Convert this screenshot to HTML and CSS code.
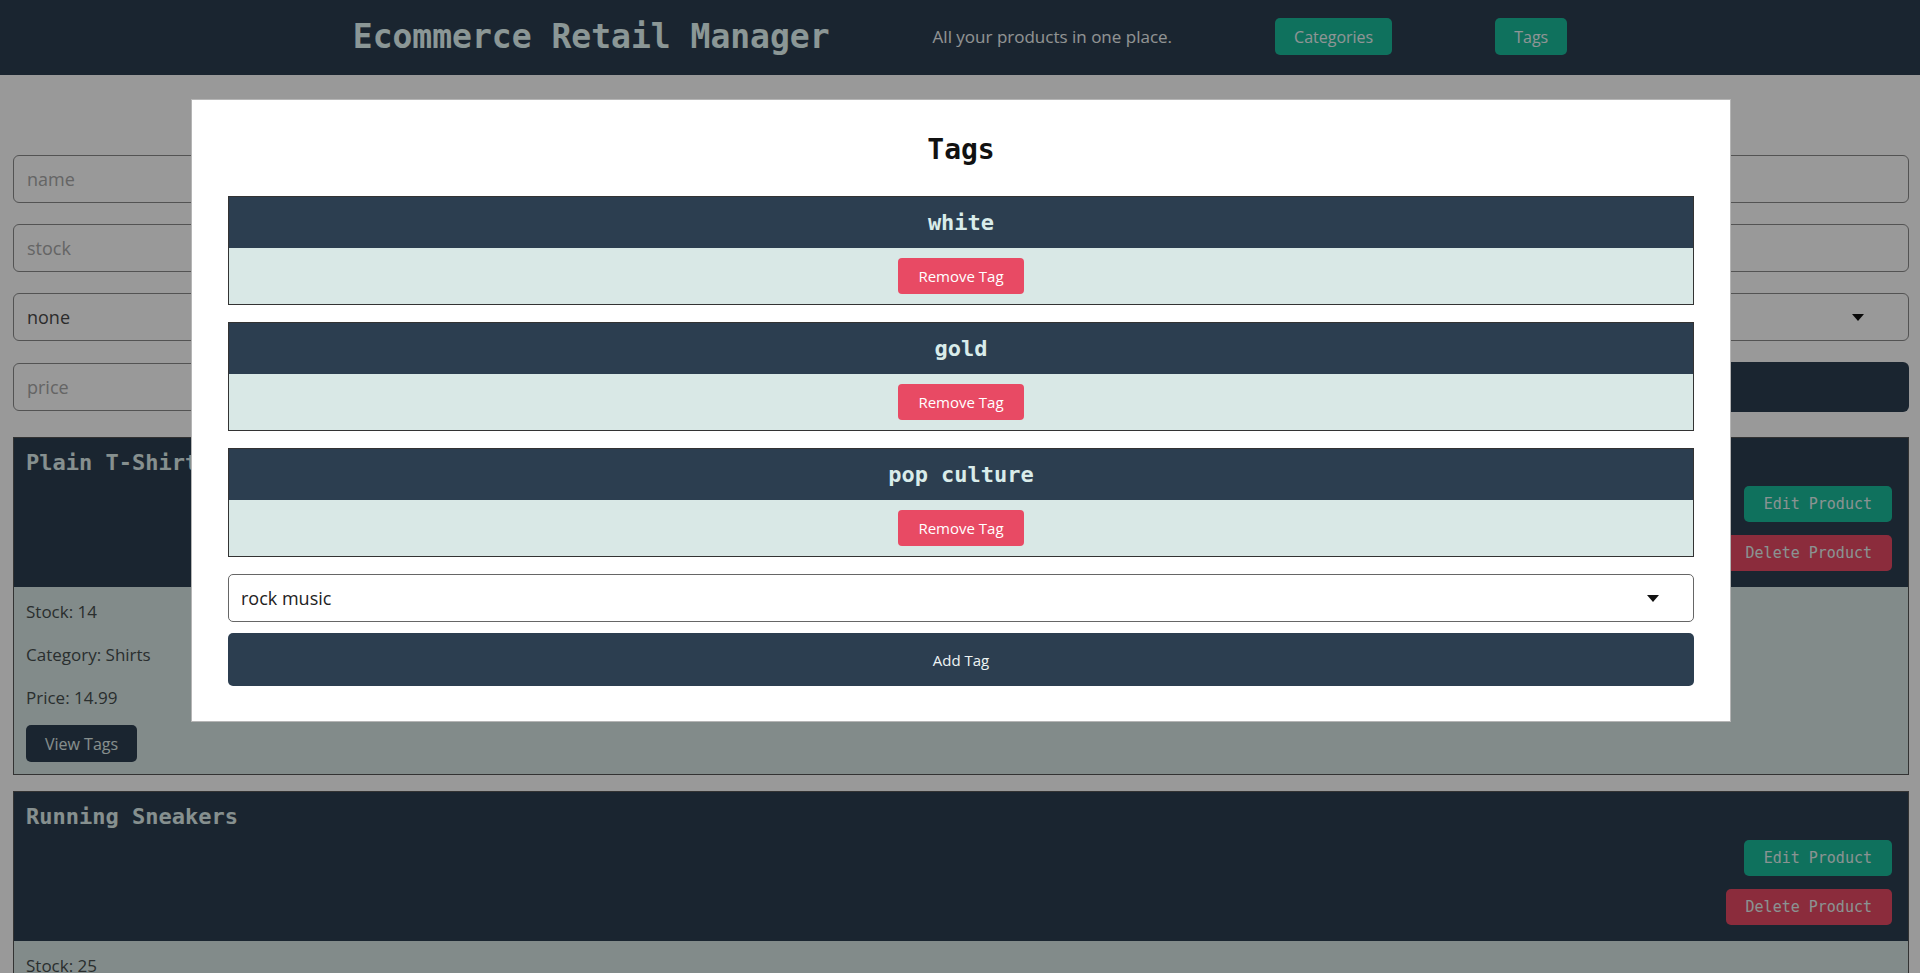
FILE: index.html
```
<!DOCTYPE html>
<html lang="en">
<head>
<meta charset="utf-8">
<title>Ecommerce Retail Manager</title>
<link rel="stylesheet" href="styles.css">
</head>
<body>
<header class="topbar">
  <h1 class="brand">Ecommerce Retail Manager</h1>
  <p class="tagline">All your products in one place.</p>
  <button class="nav-btn">Categories</button>
  <button class="nav-btn">Tags</button>
</header>

<main class="content">
  <form class="product-form">
    <input class="field" type="text" placeholder="name">
    <input class="field" type="text" placeholder="stock">
    <div class="field select-field">
      <span>none</span>
      <svg class="caret" width="12" height="7" viewBox="0 0 12 7"><path d="M0 0h12L6 7z" fill="#111"/></svg>
    </div>
    <div class="price-row">
      <input class="field price-input" type="text" placeholder="price">
      <button class="submit-btn" type="button">Add Product</button>
    </div>
  </form>

  <section class="product-list">
    <article class="product-card">
      <div class="product-head">
        <h2 class="product-name">Plain T-Shirt</h2>
        <div class="actions">
          <button class="btn-edit">Edit Product</button>
          <button class="btn-delete">Delete Product</button>
        </div>
      </div>
      <div class="product-body">
        <p>Stock: 14</p>
        <p>Category: Shirts</p>
        <p>Price: 14.99</p>
        <button class="btn-view">View Tags</button>
      </div>
    </article>
    <article class="product-card">
      <div class="product-head">
        <h2 class="product-name">Running Sneakers</h2>
        <div class="actions">
          <button class="btn-edit">Edit Product</button>
          <button class="btn-delete">Delete Product</button>
        </div>
      </div>
      <div class="product-body">
        <p>Stock: 25</p>
        <p>Category: Shoes</p>
        <p>Price: 90</p>
        <button class="btn-view">View Tags</button>
      </div>
    </article>
  </section>
</main>

<div class="overlay"></div>

<div class="modal">
  <h2 class="modal-title">Tags</h2>
  <div class="tag-list">
    <div class="tag-card">
      <div class="tag-head">white</div>
      <div class="tag-body"><button class="btn-remove">Remove Tag</button></div>
    </div>
    <div class="tag-card">
      <div class="tag-head">gold</div>
      <div class="tag-body"><button class="btn-remove">Remove Tag</button></div>
    </div>
    <div class="tag-card">
      <div class="tag-head">pop culture</div>
      <div class="tag-body"><button class="btn-remove">Remove Tag</button></div>
    </div>
    <div class="tag-select">
      <span>rock music</span>
      <svg class="caret" width="12" height="7" viewBox="0 0 12 7"><path d="M0 0h12L6 7z" fill="#111"/></svg>
    </div>
  </div>
  <button class="btn-add">Add Tag</button>
</div>
</body>
</html>
```

FILE: styles.css
```
* { box-sizing: border-box; }

body {
  margin: 0;
  background: #ffffff;
  font-family: "Open Sans", "Noto Sans", sans-serif;
}

button { font-family: inherit; cursor: pointer; }

.topbar {
  height: 75px;
  background: #2c3e50;
  display: flex;
  align-items: center;
  justify-content: center;
  gap: 103px;
  padding-bottom: 2px;
}

.brand {
  margin: 0;
  font-family: "DejaVu Sans Mono", monospace;
  font-weight: bold;
  font-size: 33px;
  color: #e8fcfa;
}

.tagline {
  margin: 0;
  font-size: 17px;
  color: #f2f6f6;
}

.nav-btn {
  height: 37px;
  padding: 0 19px;
  border: none;
  border-radius: 5px;
  background: #1abc9c;
  color: #eef8f8;
  font-size: 16px;
}

.content {
  padding: 0 11px 0 13px;
}

.product-form {
  display: flex;
  flex-direction: column;
  gap: 21px;
  padding-top: 80px;
}

.field {
  height: 48px;
  width: 100%;
  border: 1px solid #8a8a8a;
  border-radius: 6px;
  background: transparent;
  padding: 0 13px;
  font-family: "Open Sans", sans-serif;
  font-size: 18px;
  color: #444;
}

.field::placeholder { color: #a8a8a8; }

.select-field {
  display: flex;
  align-items: center;
  justify-content: space-between;
  padding-right: 44px;
  color: #4a4a4a;
}

.price-row {
  display: flex;
  gap: 12px;
  align-items: center;
}

.price-input { flex: 1; }

.submit-btn {
  flex: 1;
  height: 50px;
  border: none;
  border-radius: 6px;
  background: #2c3e50;
  color: #d9e8e6;
  font-size: 16px;
}

.product-list {
  display: flex;
  flex-direction: column;
  gap: 16px;
  margin-top: 25px;
}

.product-card {
  border: 1px solid #555;
}

.product-head {
  background: #2c3e50;
  padding: 12px 16px 16px 12px;
}

.product-name {
  margin: 0;
  font-family: "DejaVu Sans Mono", monospace;
  font-weight: bold;
  font-size: 22px;
  line-height: 26px;
  color: #e0f0ee;
}

.actions {
  margin-top: 10px;
  display: flex;
  flex-direction: column;
  align-items: flex-end;
  gap: 13px;
}

.btn-edit, .btn-delete {
  height: 36px;
  padding: 0 20px;
  border: none;
  border-radius: 5px;
  font-family: "DejaVu Sans Mono", monospace;
  font-size: 15px;
  color: #e6f5f3;
}

.btn-edit { background: #1abc9c; }
.btn-delete { background: #e84a64; }

.product-body {
  background: #d9e8e6;
  padding: 13px 12px 12px;
}

.product-body p {
  margin: 0 0 19px;
  font-size: 17px;
  line-height: 24px;
  color: #464e4e;
}

.product-body p:nth-of-type(3) { margin-bottom: 15px; }

.btn-view {
  height: 37px;
  padding: 0 19px;
  border: none;
  border-radius: 5px;
  background: #2c3e50;
  color: #e0eeec;
  font-size: 16px;
}

.overlay {
  position: fixed;
  inset: 0;
  background: rgba(0, 0, 0, 0.4);
}

.modal {
  position: fixed;
  top: 99px;
  left: 191px;
  width: 1540px;
  background: #ffffff;
  border: 1px solid #b5b5b5;
  padding: 33px 36px 35px;
}

.modal-title {
  margin: 0 0 30px;
  text-align: center;
  font-family: "DejaVu Sans Mono", monospace;
  font-weight: bold;
  font-size: 28px;
  line-height: 33px;
  color: #111;
}

.tag-list {
  display: flex;
  flex-direction: column;
  gap: 17px;
}

.tag-card {
  border: 1px solid #333;
}

.tag-head {
  height: 51px;
  background: #2c3e50;
  display: flex;
  align-items: center;
  justify-content: center;
  font-family: "DejaVu Sans Mono", monospace;
  font-weight: bold;
  font-size: 22px;
  color: #d9ecea;
}

.tag-body {
  background: #d9e8e6;
  padding: 10px 0;
  display: flex;
  justify-content: center;
}

.btn-remove {
  height: 36px;
  padding: 0 20px;
  border: none;
  border-radius: 4px;
  background: #e84a64;
  color: #ffffff;
  font-size: 15px;
}

.tag-select {
  height: 48px;
  border: 1px solid #666;
  border-radius: 5px;
  background: #fff;
  padding: 0 34px 0 12px;
  display: flex;
  align-items: center;
  justify-content: space-between;
  font-size: 18px;
  color: #222;
}

.btn-add {
  margin-top: 11px;
  width: 100%;
  height: 53px;
  border: none;
  border-radius: 5px;
  background: #2c3e50;
  color: #eef4f4;
  font-size: 15px;
}
```
